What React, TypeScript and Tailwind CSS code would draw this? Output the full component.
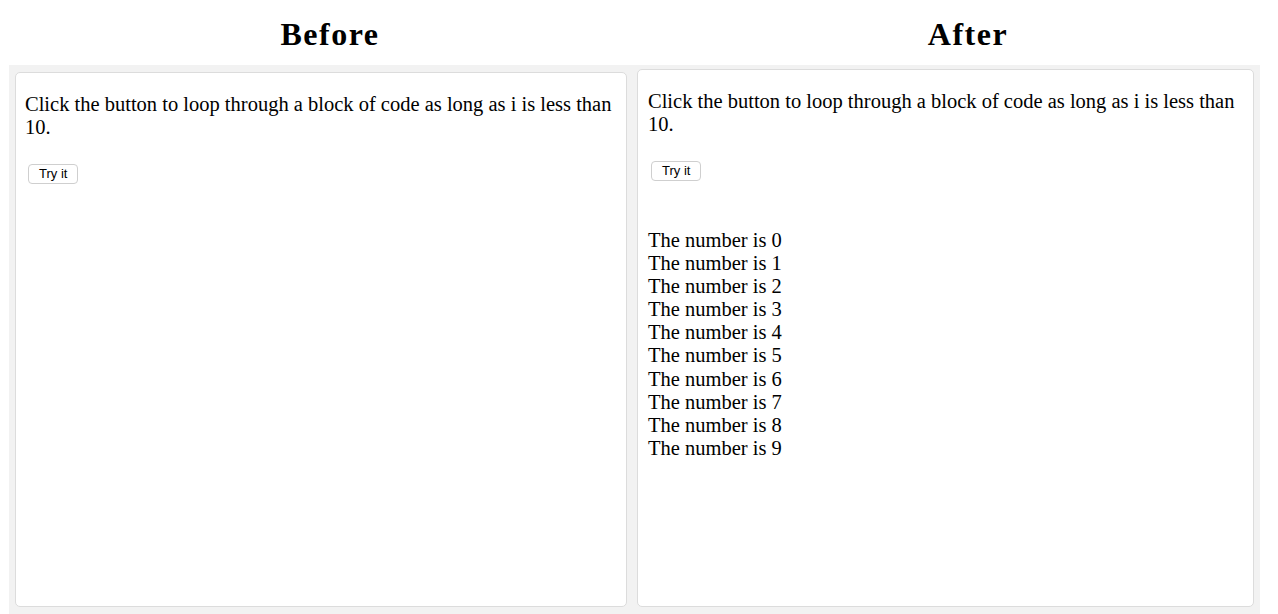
export default function App() {
  const nums = [0, 1, 2, 3, 4, 5, 6, 7, 8, 9];
  const serif = { fontFamily: '"Liberation Serif", "Times New Roman", serif' };
  const sans = { fontFamily: '"Liberation Sans", Arial, sans-serif' };
  return (
    <div className="w-[1278px] h-[614px] bg-white overflow-hidden" style={serif}>
      <div className="flex h-[65px]">
        <div className="w-[660px] flex justify-center pt-[14px]">
          <h1 className="text-[32px] font-bold leading-[40px] tracking-[1.5px] text-black">Before</h1>
        </div>
        <div className="w-[618px] flex justify-center pt-[14px] pr-[2px]">
          <h1 className="text-[32px] font-bold leading-[40px] tracking-[1.5px] text-black">After</h1>
        </div>
      </div>
      <div className="ml-[9px] w-[1251px] h-[549px] bg-[#f2f2f2] flex gap-[10px] pl-[6px] pr-[6px] pb-[7px]">
        <div className="mt-[7px] w-[612px] bg-white border border-[#dcdcdc] rounded-[5px] px-[9px] pt-[20px]">
          <p className="text-[20.5px] leading-[23px] text-black">
            Click the button to loop through a block of code as long as i is less than 10.
          </p>
          <button
            className="mt-[25px] ml-[3px] h-[20px] px-[10px] text-[13px] leading-[18px] bg-white border border-[#cfcfcf] rounded-[4px] text-black"
            style={sans}
          >
            Try it
          </button>
        </div>
        <div className="mt-[4px] w-[617px] bg-white border border-[#dcdcdc] rounded-[5px] px-[10px] pt-[20px]">
          <p className="text-[20.5px] leading-[23px] text-black">
            Click the button to loop through a block of code as long as i is less than 10.
          </p>
          <button
            className="mt-[25px] ml-[3px] h-[20px] px-[10px] text-[13px] leading-[18px] bg-white border border-[#cfcfcf] rounded-[4px] text-black"
            style={sans}
          >
            Try it
          </button>
          <div className="mt-[47px] text-[20.5px] leading-[23.1px] text-black">
            {nums.map((n) => (
              <div key={n}>The number is {n}</div>
            ))}
          </div>
        </div>
      </div>
    </div>
  );
}
